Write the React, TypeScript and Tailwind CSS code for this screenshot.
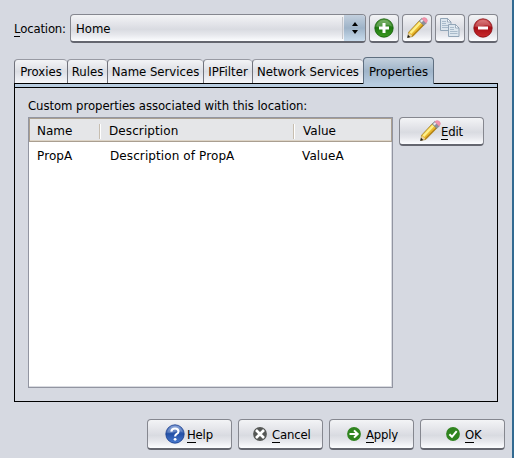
import React from "react";

const btn =
  "box-border flex items-center rounded-[4px] border border-[#85878f] border-b-2 border-b-[#64666f] bg-[linear-gradient(#f3f4f6_0%,#e3e4e9_35%,#d9dbe1_55%,#e6e7ec_75%,#fcfdff_100%)]";

function Mn({ text, className = "" }: { text: string; className?: string }) {
  return (
    <span className={`whitespace-nowrap pt-px tracking-[-0.2px] ${className}`}>
      <span className="inline-block border-b border-black leading-[14px]">{text[0]}</span>
      {text.slice(1)}
    </span>
  );
}

function Pencil() {
  return (
    <svg width="22" height="22" viewBox="0 0 22 22">
      <path d="M1.8 20.4 2.6 15.2 13.2 3.7 17.9 8.2 6.8 19.5Z" fill="#eab92f" stroke="#8d7226" strokeWidth=".6" />
      <path d="M3.6 15.2 13.8 4.4l1.7 1.7L5.2 17Z" fill="#fdf08a" />
      <path d="m6.3 18.8 11-11" stroke="#b37e14" strokeWidth="1.1" />
      <path d="M1.8 20.4 2.8 15.7 6.3 19.1Z" fill="#e8d3a6" />
      <path d="m1.2 20.9.8-3.1 2.3 2.2Z" fill="#1c1c1c" />
      <path d="m13.1 3.9 2.6-2.6 4.7 4.6L17.9 8.5Z" fill="#8b909b" stroke="#6a6f7b" strokeWidth=".4" />
      <path d="m14 4 2.1-2.1 1.5 1.5-2.1 2.1Z" fill="#e5e8ed" />
      <path d="M15.7 1.8Q18-.6 20.5 1.5 22.6 3.8 20.1 6.2Z" fill="#f492ab" stroke="#d97f96" strokeWidth=".4" />
    </svg>
  );
}

function Round({ kind }: { kind: "plus" | "minus" | "help" }) {
  const c = {
    plus: ["#5fa346", "#1f7a10", "#3c9a22", "#0f5c05"],
    minus: ["#d86464", "#a80f16", "#c92a2e", "#860a10"],
    help: ["#7d9bd6", "#2350a6", "#4a7bd0", "#163b8b"],
  }[kind];
  return (
    <svg width="20" height="20" viewBox="0 0 20 20">
      <defs>
        <linearGradient id={kind} x2="0" y2="1">
          <stop stopColor={c[0]} />
          <stop offset=".5" stopColor={c[1]} />
          <stop offset="1" stopColor={c[2]} />
        </linearGradient>
      </defs>
      <circle cx="10" cy="10" r="9.2" fill={`url(#${kind})`} stroke={c[3]} strokeWidth=".8" />
      <path d="M2 8.5A8.2 8.2 0 0 1 18 8.5Q14 6.5 10 8T2 8.5Z" fill="#fff" opacity=".2" />
      {kind === "plus" && <path d="M10 5v10M5 10h10" stroke="#fff" strokeWidth="3" />}
      {kind === "minus" && <path d="M5 10h10" stroke="#fff" strokeWidth="3" />}
      {kind === "help" && (
        <>
          <path d="M6.3 7.6Q6.6 4.5 10 4.5t3.5 2.9Q13.5 8.9 11.4 10.1 10.1 10.9 10.1 12.6" fill="none" stroke="#fff" strokeWidth="2.1" />
          <circle cx="10.1" cy="15.3" r="1.4" fill="#fff" />
        </>
      )}
    </svg>
  );
}

function Sheet({ x, y }: { x: number; y: number }) {
  return (
    <g transform={`translate(${x} ${y})`}>
      <path d="M.5.5h7l3.5 3.5v8.5H.5Z" fill="#dce6ee" stroke="#93a6b8" />
      <path d="M7.5.5V4h3.5Z" fill="#f8fbff" stroke="#7f93a6" strokeWidth=".7" />
      <path d="M2 3.5h4M2 5.5h4M2 7.5h7.5M2 9.5h7.5" stroke="#a3b5c6" strokeWidth=".9" />
    </g>
  );
}

function Copy() {
  return (
    <svg width="22" height="22" viewBox="0 0 22 22">
      <Sheet x={1} y={1} />
      <Sheet x={9} y={7} />
    </svg>
  );
}

function Small({ kind }: { kind: "x" | "arrow" | "check" }) {
  return (
    <svg width="14" height="14" viewBox="0 0 14 14">
      <circle cx="7" cy="7" r="6.9" fill={kind === "x" ? "#555755" : "#30841f"} />
      {kind === "x" && <path d="m3 3 8 8m0-8-8 8" stroke="#fff" strokeWidth="2.6" />}
      {kind === "arrow" && <path d="M2.5 7h8.2M7 3.4 10.7 7 7 10.6" fill="none" stroke="#fff" strokeWidth="2" />}
      {kind === "check" && <path d="m3.4 7.2 2.6 2.6 4.7-5.6" fill="none" stroke="#fff" strokeWidth="2" />}
    </svg>
  );
}

const tabs = [
  { name: "Proxies", w: "w-[53px]" },
  { name: "Rules", w: "w-[40px]" },
  { name: "Name Services", w: "w-[96px]" },
  { name: "IPFilter", w: "w-[49px]" },
  { name: "Network Services", w: "w-[111px]" },
];

export default function App() {
  return (
    <div className="flex h-[458px] w-[514px] overflow-hidden bg-[#d6d9e1] font-['DejaVu_Sans_Condensed','DejaVu_Sans',sans-serif] text-[13px] leading-[15px] text-black [font-stretch:condensed]">
      <div className="flex w-[512px] flex-col">
        <div className="mt-[14px] flex h-[29px] items-center pl-[14px]">
          <Mn text="Location:" className="w-[56px]" />
          <div className={`${btn} mr-[3px] h-[29px] w-[296px] overflow-hidden pl-[5px]`}>
            <span className="flex-1 pt-px">Home</span>
            <span className="mr-px h-[22px] w-px bg-[#c3c5ca]" />
            <span className="flex h-full w-[21px] items-center justify-center bg-[linear-gradient(#c3d0de,#9eb3c8_50%,#c9dced)]">
              <svg width="6" height="12" viewBox="0 0 6 12"><path d="m0 4 3-4 3 4ZM0 8h6l-3 4Z" /></svg>
            </span>
          </div>
          <div className="flex gap-[3px]">
            <div className={`${btn} h-[29px] w-[30px] justify-center`}><Round kind="plus" /></div>
            <div className={`${btn} h-[29px] w-[30px] justify-center`}><Pencil /></div>
            <div className={`${btn} h-[29px] w-[30px] justify-center`}><Copy /></div>
            <div className={`${btn} h-[29px] w-[30px] justify-center`}><Round kind="minus" /></div>
          </div>
        </div>
        <div className="mt-[14px] ml-[14px] flex h-[26px] items-end">
          {tabs.map((t) => (
            <div key={t.name} className={`${t.w} flex h-[24px] items-center justify-center whitespace-nowrap rounded-t-[4px] border-t border-l border-t-[#989aa3] border-l-[#70727b] bg-[linear-gradient(#f3f4f6,#dcdee4_50%,#f5f6fa)]`}>
              {t.name}
            </div>
          ))}
          <div className="relative z-10 -mb-px flex h-[27px] w-[71px] items-center justify-center rounded-t-[4px] border border-b-0 border-[#5f6f80] bg-[linear-gradient(#c5d1dd,#9fb4c9_50%,#b8cce0)]">
            Properties
          </div>
        </div>
        <div className="ml-[14px] h-[319px] w-[484px] border border-black">
          <div className="h-[4px] border-b border-black bg-[#b8cce0]" />
          <div className="pt-[10px] pl-[13px]">
            <div className="h-[19px] whitespace-nowrap tracking-[-0.06px]">Custom properties associated with this location:</div>
            <div className="flex gap-[6px]">
              <div className="h-[271px] w-[365px] border border-[#9295a1] bg-white font-['DejaVu_Sans',sans-serif] text-[12px] tracking-[0.1px] [font-stretch:normal] shadow-[inset_-1px_-1px_0_#d9dbe1]">
                <div className="flex h-[24px] items-center border border-[#aa9f90] bg-[#e5e6e8] pt-[2px] pl-[7px] shadow-[inset_0_-1px_0_#ddd4c6]">
                  <span className="w-[62px] tracking-normal">Name</span>
                  <span className="h-[15px] w-[2px] border-l border-[#c7beb0] bg-white" />
                  <span className="w-[192px] pl-[8px]">Description</span>
                  <span className="h-[15px] w-[2px] border-l border-[#c7beb0] bg-white" />
                  <span className="pl-[8px] tracking-normal">Value</span>
                </div>
                <div className="flex h-[28px] items-center pl-[8px]">
                  <span className="w-[73px]">PropA</span>
                  <span className="w-[192px]">Description of PropA</span>
                  <span>ValueA</span>
                </div>
              </div>
              <div className={`${btn} h-[29px] w-[85px] pl-[19px]`}><Pencil /><Mn text="Edit" /></div>
            </div>
          </div>
        </div>
        <div className="mt-[17px] ml-[147px] flex gap-[6px]">
          <div className={`${btn} h-[31px] w-[85px] gap-[2px] pl-[17px]`}><Round kind="help" /><Mn text="Help" /></div>
          <div className={`${btn} h-[31px] w-[85px] gap-[5px] pl-[14px]`}><Small kind="x" /><Mn text="Cancel" /></div>
          <div className={`${btn} h-[31px] w-[85px] gap-[5px] pl-[17px]`}><Small kind="arrow" /><Mn text="Apply" /></div>
          <div className={`${btn} h-[31px] w-[85px] gap-[5px] pl-[25px]`}><Small kind="check" /><Mn text="OK" /></div>
        </div>
      </div>
      <div className="w-[2px] bg-[#326a91]" />
    </div>
  );
}
